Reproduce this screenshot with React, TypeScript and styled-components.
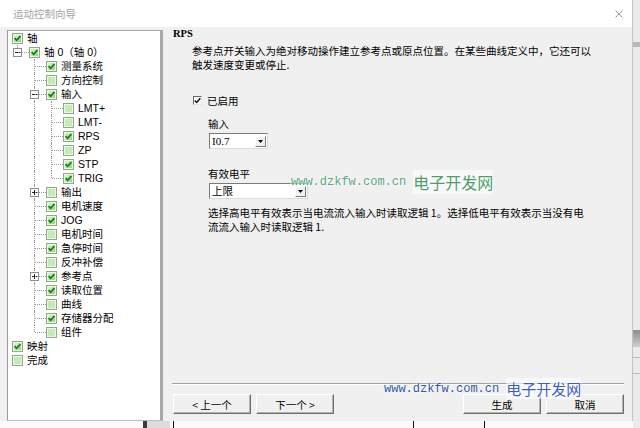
import React from "react";
import styled, { createGlobalStyle, css } from "styled-components";

const GlobalStyle = createGlobalStyle`
  html, body { margin: 0; padding: 0; background: #fff; }
  body {
    font-family: "Liberation Sans", "Noto Sans CJK SC", sans-serif;
    font-size: 10.5px;
    color: #000;
  }
`;

type GuideKind = " " | "I" | "T" | "L";

type TreeNode = {
  label: string;
  checked: boolean;
  guides: string;
  toggle?: "-" | "+";
};

const treeNodes: TreeNode[] = [
  { label: "轴", checked: true, guides: "" },
  { label: "轴 0（轴 0）", checked: true, guides: "L", toggle: "-" },
  { label: "测量系统", checked: true, guides: " T" },
  { label: "方向控制", checked: false, guides: " T" },
  { label: "输入", checked: true, guides: " T", toggle: "-" },
  { label: "LMT+", checked: false, guides: " IT" },
  { label: "LMT-", checked: false, guides: " IT" },
  { label: "RPS", checked: true, guides: " IT" },
  { label: "ZP", checked: false, guides: " IT" },
  { label: "STP", checked: true, guides: " IT" },
  { label: "TRIG", checked: true, guides: " IL" },
  { label: "输出", checked: false, guides: " T", toggle: "+" },
  { label: "电机速度", checked: true, guides: " T" },
  { label: "JOG", checked: true, guides: " T" },
  { label: "电机时间", checked: false, guides: " T" },
  { label: "急停时间", checked: true, guides: " T" },
  { label: "反冲补偿", checked: false, guides: " T" },
  { label: "参考点", checked: true, guides: " T", toggle: "+" },
  { label: "读取位置", checked: true, guides: " T" },
  { label: "曲线", checked: false, guides: " T" },
  { label: "存储器分配", checked: true, guides: " T" },
  { label: "组件", checked: false, guides: " L" },
  { label: "映射", checked: true, guides: "" },
  { label: "完成", checked: false, guides: "" },
];

const Screen = styled.div`
  width: 640px;
  height: 428px;
  display: grid;
  grid-template-columns: 633px 7px;
  grid-template-rows: 421px 7px;
  overflow: hidden;
  position: relative;
  background: #fff;
`;

const Dialog = styled.div`
  grid-row: 1;
  grid-column: 1;
  display: flex;
  flex-direction: column;
  border-right: 1px solid #c4c4c4;
  background: #f0f0f0;
  min-height: 0;
`;

const TitleBar = styled.div`
  height: 27px;
  flex: none;
  background: #fff;
  display: flex;
  align-items: center;
  justify-content: space-between;
  padding: 0 9px 0 13px;
  color: #a3a3a3;
  font-family: "Noto Sans CJK SC", sans-serif;
  font-size: 10.5px;
`;

const Body = styled.div`
  flex: 1;
  display: flex;
  min-height: 0;
  padding-left: 7px;
`;

const TreePanel = styled.div`
  width: 156px;
  flex: none;
  box-sizing: border-box;
  margin-top: 3px;
  background: #fff;
  border-top: 1px solid #a8a8a8;
  border-left: 1px solid #9a9a9a;
  border-right: 3px solid #a9a9a9;
  border-bottom: 1px solid #bdbdbd;
  padding-left: 4px;
  display: flex;
  flex-direction: column;
`;

const TreeRow = styled.div`
  height: 14px;
  display: flex;
  align-items: center;
`;

const Guide = styled.div<{ $kind: GuideKind }>`
  width: 17px;
  height: 14px;
  flex: none;
  position: relative;

  &::before {
    content: "";
    position: absolute;
    left: 5px;
    top: 0;
    width: 0;
    border-left: 1px dotted #9c9c9c;
    display: ${(p) => (p.$kind === " " ? "none" : "block")};
    height: ${(p) => (p.$kind === "L" ? "7px" : "14px")};
  }

  &::after {
    content: "";
    position: absolute;
    left: 6px;
    top: 7px;
    width: 11px;
    height: 0;
    border-top: 1px dotted #9c9c9c;
    display: ${(p) => (p.$kind === "T" || p.$kind === "L" ? "block" : "none")};
  }
`;

const Toggle = styled.svg`
  position: absolute;
  left: 1px;
  top: 3px;
`;

const TreeLabel = styled.span`
  margin-left: 4px;
  line-height: 14px;
  white-space: nowrap;
  font-family: "Liberation Sans", "Noto Sans CJK SC", sans-serif;
  font-size: 10.5px;
`;

const Pane = styled.div`
  flex: 1;
  min-width: 0;
  display: flex;
  flex-direction: column;
  padding: 0 8px 7px 10px;
`;

const PageTitle = styled.div`
  margin-top: 1px;
  font-family: "Liberation Serif", serif;
  font-weight: bold;
  font-size: 10.5px;
  line-height: 12px;
`;

const Paragraph = styled.div<{ $indent: number; $top: number }>`
  margin-left: ${(p) => p.$indent}px;
  margin-top: ${(p) => p.$top}px;
  font-family: "Noto Sans CJK SC", sans-serif;
  font-size: 10.5px;
  line-height: 14px;
  white-space: nowrap;
`;

const CheckRow = styled.label`
  margin-top: 21px;
  margin-left: 20px;
  height: 14px;
  display: flex;
  align-items: center;
  gap: 5px;
  font-family: "Noto Sans CJK SC", sans-serif;
  font-size: 10.5px;
`;

const CheckBox = styled.span`
  width: 9px;
  height: 9px;
  box-sizing: border-box;
  background: #fff;
  border-top: 1px solid #6a6a6a;
  border-left: 1px solid #6a6a6a;
  border-right: 1px solid #e4e4e4;
  border-bottom: 1px solid #e4e4e4;
  display: flex;
  align-items: center;
  justify-content: center;
`;

const FieldLabel = styled.div<{ $top: number }>`
  margin-top: ${(p) => p.$top}px;
  margin-left: 35px;
  height: 13px;
  line-height: 13px;
  font-family: "Noto Sans CJK SC", sans-serif;
  font-size: 10.5px;
`;

const Select = styled.div<{ $width: number }>`
  margin-top: 3px;
  margin-left: 36px;
  width: ${(p) => p.$width}px;
  height: 16px;
  box-sizing: border-box;
  background: #fff;
  border-top: 1px solid #7a7a7a;
  border-left: 1px solid #7a7a7a;
  border-right: 1px solid #dadada;
  border-bottom: 1px solid #dadada;
  display: flex;
  align-items: center;
  justify-content: space-between;
  padding: 0 1px 0 2px;
`;

const SelectValue = styled.span<{ $serif?: boolean }>`
  font-size: 10.5px;
  line-height: 14px;
  ${(p) =>
    p.$serif
      ? css`font-family: "Liberation Serif", serif; font-size: 11px;`
      : css`font-family: "Noto Sans CJK SC", sans-serif;`}
`;

const ArrowButton = styled.span`
  width: 11px;
  height: 11px;
  box-sizing: border-box;
  background: #f0f0f0;
  border-top: 1px solid #fff;
  border-left: 1px solid #fff;
  border-right: 1px solid #7a7a7a;
  border-bottom: 1px solid #7a7a7a;
  display: flex;
  align-items: center;
  justify-content: center;
`;

const Spacer = styled.div`
  flex: 1;
`;

const Separator = styled.div`
  height: 0;
  margin-left: -1px;
  border-top: 1px solid #a0a0a0;
  border-bottom: 1px solid #fff;
`;

const ButtonRow = styled.div`
  margin-top: 9px;
  display: flex;
  gap: 5px;
`;

const WizardButton = styled.button<{ $pushRight?: boolean }>`
  width: 78px;
  height: 20px;
  padding: 0;
  box-sizing: border-box;
  background: #f0f0f0;
  border-top: 1px solid #fff;
  border-left: 1px solid #fff;
  border-right: 1px solid #6e6e6e;
  border-bottom: 1px solid #6e6e6e;
  box-shadow: inset -1px -1px 0 #b4b4b4;
  font-family: "Noto Sans CJK SC", sans-serif;
  font-size: 10.5px;
  color: #000;
  ${(p) => p.$pushRight && css`margin-left: auto;`}
`;

const RightStrip = styled.div`
  grid-row: 1 / span 2;
  grid-column: 2;
  background:
    linear-gradient(to bottom, transparent 42px, #b9b9b9 42px, #b9b9b9 47px, transparent 47px),
    linear-gradient(to bottom, transparent 330px, #8e8e8e 330px, #cfcfcf 347px, transparent 347px),
    linear-gradient(to bottom, transparent 357px, #bcbcbc 357px, #bcbcbc 358px, transparent 358px),
    linear-gradient(to bottom, transparent 373px, #bcbcbc 373px, #bcbcbc 374px, transparent 374px),
    #ebebeb;
`;

const BottomStrip = styled.div`
  grid-row: 2;
  grid-column: 1;
  background:
    linear-gradient(to right, transparent 143px, #3c3c3c 143px, #3c3c3c 147px, #dcdcdc 147px, #dcdcdc 170px, transparent 170px),
    linear-gradient(to right, transparent 173px, #111 173px, #111 174px, transparent 174px),
    linear-gradient(to right, transparent 413px, #111 413px, #111 414px, transparent 414px),
    linear-gradient(to right, transparent 484px, #111 484px, #111 485px, transparent 485px),
    #fafafa;
`;

const Watermark = styled.div<{ $left: number; $top: number; $color: string; $hanColor: string; $hanSize: number }>`
  position: absolute;
  left: ${(p) => p.$left}px;
  top: ${(p) => p.$top}px;
  display: flex;
  align-items: center;
  gap: 7px;
  white-space: nowrap;
  color: ${(p) => p.$color};
  text-shadow: 0 0 2px #fff, 0 0 3px #fff;

  span:first-child {
    font-family: "Liberation Mono", monospace;
    font-size: 12px;
  }
  span:last-child {
    font-family: "Noto Sans CJK SC", sans-serif;
    font-size: ${(p) => p.$hanSize}px;
    color: ${(p) => p.$hanColor};
    background: rgba(255, 255, 255, 0.55);
  }
`;

const TreeCheck = ({ checked }: { checked: boolean }) => (
  <svg width="11" height="11" viewBox="0 0 11 11" style={{ flex: "none" }}>
    <defs>
      <linearGradient id="tcg" x1="0" y1="0" x2="1" y2="1">
        <stop offset="0" stopColor="#dbf6cf" />
        <stop offset="1" stopColor="#8fd47c" />
      </linearGradient>
    </defs>
    <rect x="0.5" y="0.5" width="10" height="10" fill="#eaf7e4" stroke="#8fa98a" />
    <rect x="2" y="2" width="7" height="7" fill={checked ? "url(#tcg)" : "#c4ebb6"} />
    {checked && <path d="M2.6 5.2 L4.6 7.3 L8.4 3.2" stroke="#17781c" strokeWidth="1.7" fill="none" />}
  </svg>
);

const ToggleBox = ({ kind }: { kind: "-" | "+" }) => (
  <Toggle width="9" height="9" viewBox="0 0 9 9">
    <rect x="0.5" y="0.5" width="8" height="8" fill="#fff" stroke="#8e8e8e" />
    <path d="M2 4.5 H7" stroke="#222" />
    {kind === "+" && <path d="M4.5 2 V7" stroke="#222" />}
  </Toggle>
);

const DropArrow = () => (
  <ArrowButton>
    <svg width="5" height="3" viewBox="0 0 5 3">
      <path d="M0 0 H5 L2.5 3 Z" fill="#000" />
    </svg>
  </ArrowButton>
);

const App = () => {
  return (
    <>
      <GlobalStyle />
      <Screen>
        <Dialog>
          <TitleBar>
            <span>运动控制向导</span>
            <svg width="8" height="8" viewBox="0 0 8 8">
              <path d="M0.5 0.5 L7.5 7.5 M7.5 0.5 L0.5 7.5" stroke="#9a9a9a" strokeWidth="1" />
            </svg>
          </TitleBar>
          <Body>
            <TreePanel>
              {treeNodes.map((node, i) => (
                <TreeRow key={i}>
                  {node.guides.split("").map((g, k) => (
                    <Guide key={k} $kind={g as GuideKind}>
                      {k === node.guides.length - 1 && node.toggle && <ToggleBox kind={node.toggle} />}
                    </Guide>
                  ))}
                  <TreeCheck checked={node.checked} />
                  <TreeLabel>{node.label}</TreeLabel>
                </TreeRow>
              ))}
            </TreePanel>
            <Pane>
              <PageTitle>RPS</PageTitle>
              <Paragraph $indent={19} $top={4}>
                参考点开关输入为绝对移动操作建立参考点或原点位置。在某些曲线定义中，它还可以
                <br />
                触发速度变更或停止.
              </Paragraph>
              <CheckRow>
                <CheckBox>
                  <svg width="7" height="7" viewBox="0 0 7 7">
                    <path d="M0.8 3.4 L2.7 5.4 L6.3 1.2" stroke="#111" strokeWidth="1.5" fill="none" />
                  </svg>
                </CheckBox>
                已启用
              </CheckRow>
              <FieldLabel $top={10}>输入</FieldLabel>
              <Select $width={59}>
                <SelectValue $serif>I0.7</SelectValue>
                <DropArrow />
              </Select>
              <FieldLabel $top={18}>有效电平</FieldLabel>
              <Select $width={99}>
                <SelectValue>上限</SelectValue>
                <DropArrow />
              </Select>
              <Paragraph $indent={35} $top={7}>
                选择高电平有效表示当电流流入输入时读取逻辑 1。选择低电平有效表示当没有电
                <br />
                流流入输入时读取逻辑 1.
              </Paragraph>
              <Spacer />
              <Separator />
              <ButtonRow>
                <WizardButton>&lt; 上一个</WizardButton>
                <WizardButton>下一个 &gt;</WizardButton>
                <WizardButton $pushRight>生成</WizardButton>
                <WizardButton>取消</WizardButton>
              </ButtonRow>
            </Pane>
          </Body>
        </Dialog>
        <RightStrip />
        <BottomStrip />
        <Watermark $left={291} $top={170} $color="#5aa67e" $hanColor="#4c9f68" $hanSize={16}>
          <span>www.dzkfw.com.cn</span>
          <span>电子开发网</span>
        </Watermark>
        <Watermark $left={384} $top={378} $color="#2f57a8" $hanColor="#3a5fc4" $hanSize={15}>
          <span>www.dzkfw.com.cn</span>
          <span>电子开发网</span>
        </Watermark>
      </Screen>
    </>
  );
};

export default App;
